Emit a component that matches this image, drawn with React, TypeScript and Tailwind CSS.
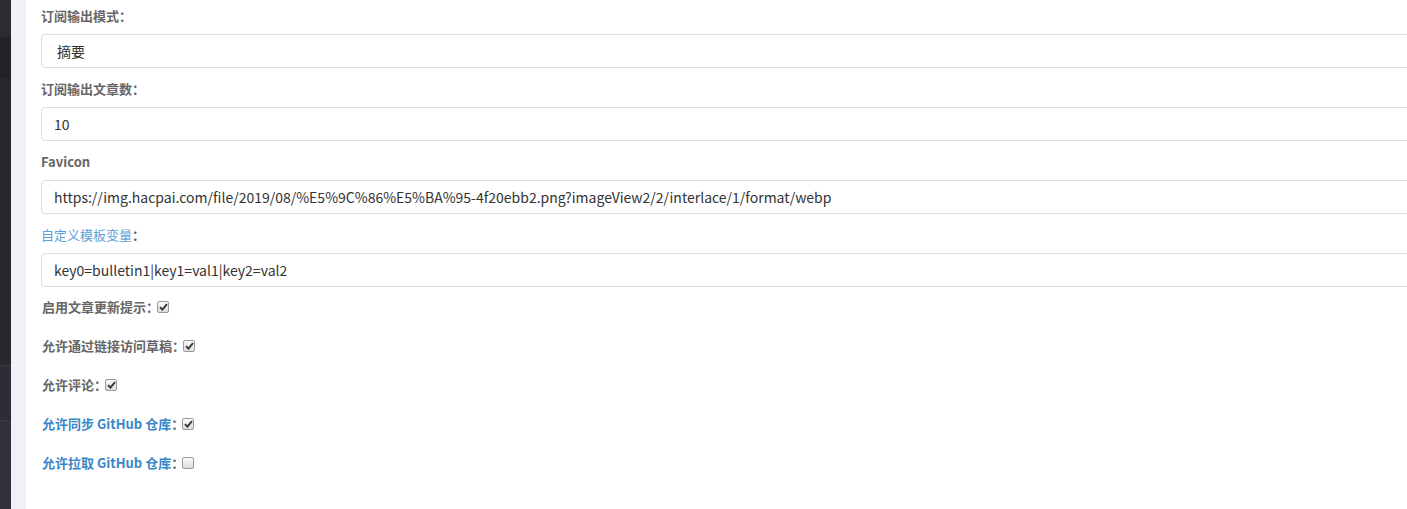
import React from 'react';

const font = { fontFamily: '"Noto Sans CJK SC", "Noto Sans", sans-serif' };

function Check({ checked }: { checked: boolean }) {
  return (
    <span className="ml-[-2px] inline-flex h-[12px] w-[12px] items-center justify-center rounded-[2px] border border-[#9a9a9a] bg-gradient-to-b from-[#fafafa] to-[#dcdcdc]">
      {checked && (
        <svg width="9" height="8" viewBox="0 0 9 8">
          <path d="M1 4.2 L3.4 6.6 L8 1.2" fill="none" stroke="#333" strokeWidth="1.8" />
        </svg>
      )}
    </span>
  );
}

function Field({ label, value, blue, select }: { label: string; value: string; blue?: boolean; select?: boolean }) {
  return (
    <div className="mt-[11px] first:mt-[6px]">
      <div className="h-[20px] text-[13px] leading-[20px] font-bold text-[#666]">
        {blue ? <span className="text-[#5b9fd8] font-normal">{label}</span> : label}
        {label !== 'Favicon' && '：'}
      </div>
      <div
        className={`mt-[8px] flex h-[34px] w-[1420px] items-center rounded-[4px] border border-[#ddd] bg-white text-[14px] text-[#333] ${
          select ? 'pl-[15px]' : 'pl-[12px]'
        }`}
      >
        {value}
      </div>
    </div>
  );
}

function Toggle({ label, checked, blue }: { label: string; checked: boolean; blue?: boolean }) {
  return (
    <div className={`flex h-[20px] items-center text-[13px] font-bold ${blue ? 'text-[#3a86c8]' : 'text-[#666]'}`}>
      <span>{label}</span>
      <span className="text-[#666]">：</span>
      <Check checked={checked} />
    </div>
  );
}

export default function App() {
  return (
    <div className="flex h-[509px] w-[1407px] overflow-hidden bg-white" style={font}>
      {/* 左侧导航 */}
      <div className="flex w-[11px] flex-col">
        <div className="h-[37px] bg-[#2b2b31]" />
        <div className="h-[41px] bg-[#222228]" />
        <div className="h-[287px] bg-[#28282e]" />
        <div className="h-[55px] border-t border-[#3b3b42] bg-[#2c2c34]" />
        <div className="flex-1 border-t border-[#3b3b42] bg-[#31313b]" />
      </div>
      <div className="w-[15px] bg-[#f0f1f6]" />

      <div className="flex-1 overflow-hidden pl-[15px]">
        <Field label="订阅输出模式" value="摘要" select />
        <Field label="订阅输出文章数" value="10" />
        <Field
          label="Favicon"
          value="https://img.hacpai.com/file/2019/08/%E5%9C%86%E5%BA%95-4f20ebb2.png?imageView2/2/interlace/1/format/webp"
        />
        <Field label="自定义模板变量" value="key0=bulletin1|key1=val1|key2=val2" blue />

        <div className="mt-[10px] flex flex-col gap-[19px] pl-[1px]">
          <Toggle label="启用文章更新提示" checked />
          <Toggle label="允许通过链接访问草稿" checked />
          <Toggle label="允许评论" checked />
          <Toggle label="允许同步 GitHub 仓库" checked blue />
          <Toggle label="允许拉取 GitHub 仓库" checked={false} blue />
        </div>
      </div>
    </div>
  );
}
